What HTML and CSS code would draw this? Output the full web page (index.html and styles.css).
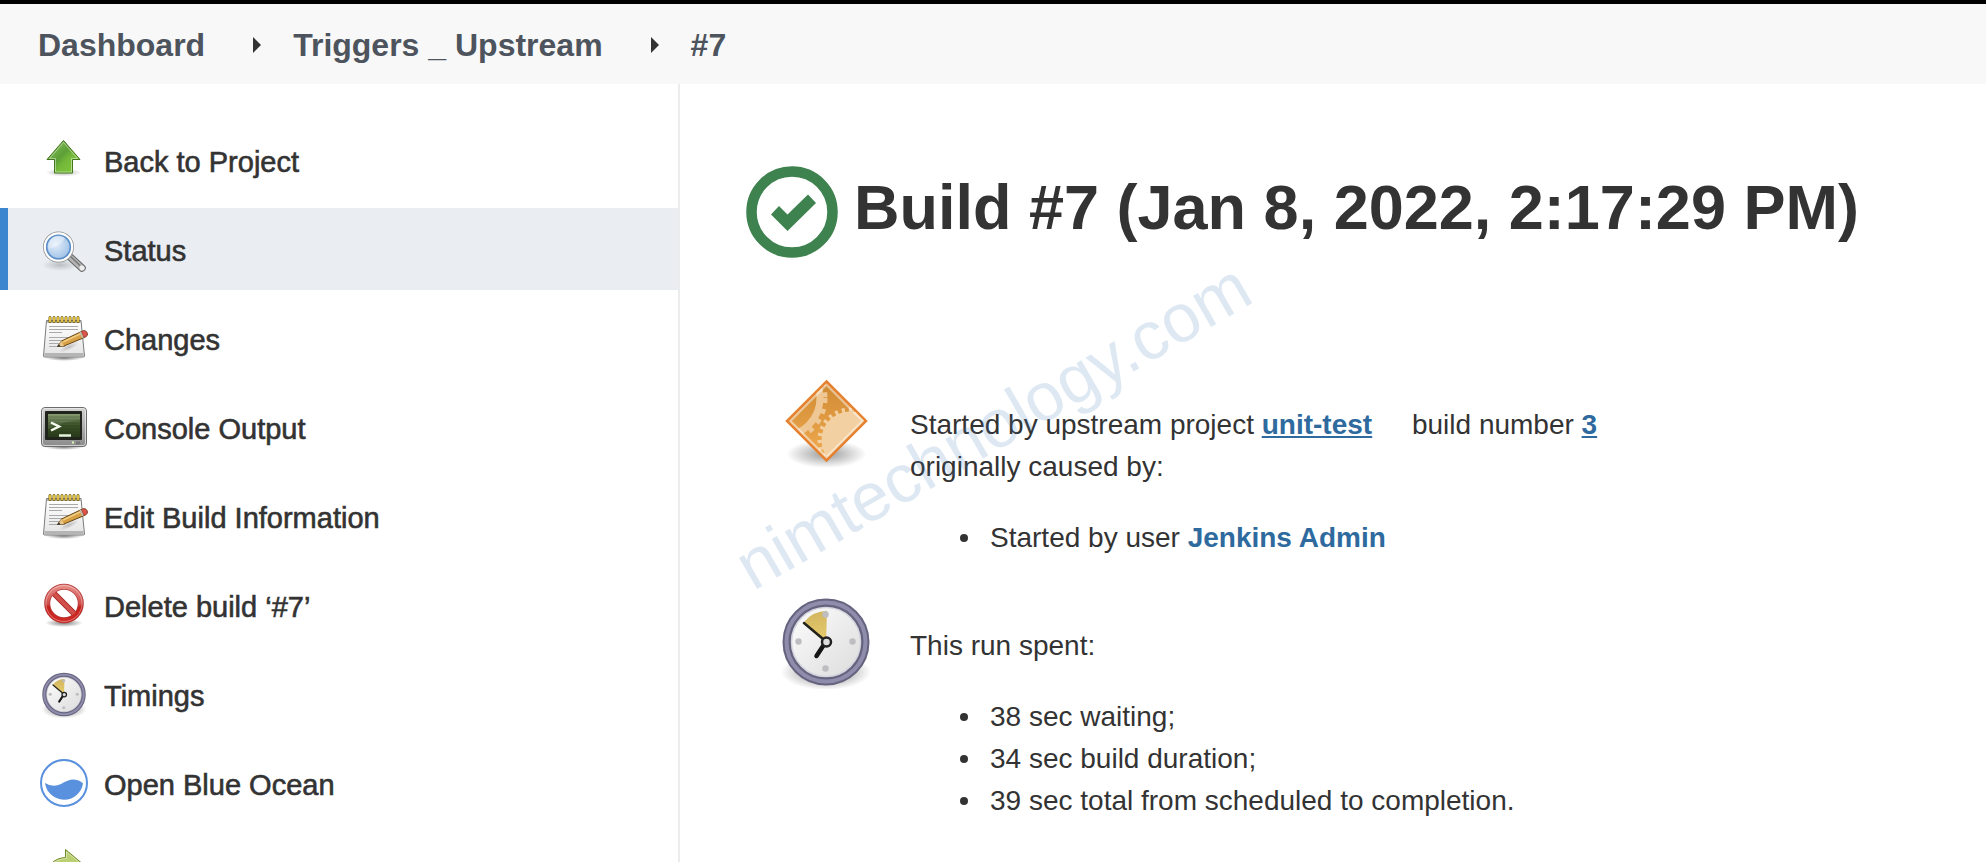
FILE: index.html
```html
<!DOCTYPE html>
<html lang="en">
<head>
    <meta charset="UTF-8">
    <meta name="viewport" content="width=device-width, initial-scale=1.0">
    <title>Triggers _ Upstream #7</title>
    <link rel="stylesheet" href="styles.css">
</head>
<body>

    <!-- shared icon definitions -->
    <svg class="defs" width="0" height="0" aria-hidden="true">
        <defs>
            <radialGradient id="shadow">
                <stop offset="0" stop-color="#000" stop-opacity=".5"/>
                <stop offset=".5" stop-color="#000" stop-opacity=".25"/>
                <stop offset="1" stop-color="#000" stop-opacity="0"/>
            </radialGradient>
            <linearGradient id="green" x1="0" y1="0" x2="1" y2="1">
                <stop offset="0" stop-color="#8fc765"/>
                <stop offset=".45" stop-color="#5d9f36"/>
                <stop offset=".6" stop-color="#74b83a"/>
                <stop offset="1" stop-color="#80cc38"/>
            </linearGradient>
            <radialGradient id="lens" cx=".4" cy=".4">
                <stop offset="0" stop-color="#e2edf9"/>
                <stop offset="1" stop-color="#a9c8e9"/>
            </radialGradient>
            <linearGradient id="paper" x1="0" y1="0" x2="0" y2="1">
                <stop offset="0" stop-color="#fff"/>
                <stop offset="1" stop-color="#e4e4e4"/>
            </linearGradient>
            <linearGradient id="metal" x1="0" y1="0" x2="0" y2="1">
                <stop offset="0" stop-color="#d4d4d4"/>
                <stop offset="1" stop-color="#8a8a8a"/>
            </linearGradient>
            <linearGradient id="screen" x1="0" y1="0" x2="0" y2="1">
                <stop offset="0" stop-color="#748c59"/>
                <stop offset=".5" stop-color="#3c5228"/>
                <stop offset="1" stop-color="#283b1a"/>
            </linearGradient>
            <linearGradient id="red" x1="0" y1="0" x2="0" y2="1">
                <stop offset="0" stop-color="#e58a86"/>
                <stop offset=".5" stop-color="#d2504b"/>
                <stop offset=".6" stop-color="#c4211d"/>
                <stop offset="1" stop-color="#cf2a26"/>
            </linearGradient>
            <linearGradient id="face" x1="0" y1="0" x2="1" y2="1">
                <stop offset="0" stop-color="#fff"/>
                <stop offset="1" stop-color="#dadada"/>
            </linearGradient>
            <linearGradient id="wedge" x1="0" y1="0" x2="0" y2="1">
                <stop offset="0" stop-color="#d2b560"/>
                <stop offset="1" stop-color="#e8cd6c"/>
            </linearGradient>
            <linearGradient id="orange" x1="0" y1="0" x2="0" y2="1">
                <stop offset="0" stop-color="#cf8a34"/>
                <stop offset="1" stop-color="#f0ab50"/>
            </linearGradient>
            <clipPath id="diamond">
                <path d="M48.500 11 86 48.500 48.500 86 11 48.500z"/>
            </clipPath>
        </defs>

        <symbol id="icon-notepad" viewBox="0 0 48 48">
            <ellipse cx="24" cy="44" rx="19" ry="3" fill="url(#shadow)"/>
            <path d="M6.500 6.500h34.500l3.500 35.500q0 1-1 1H4.500q-1 0-1-1z" fill="url(#paper)" stroke="#7c7c7c"/>
            <path d="M4.500 40.500h39" stroke="#b5b5b5" stroke-width="3"/>
            <path d="M7 8h34" stroke="#b4b4b4" stroke-width="2"/>
            <path d="M9 12.500h29M9 15.500h29M9 18.500h13M9 23.500h29M9 26.500h18M9 29.500h12M9 32.500h16" stroke="#aaa"/>
            <path d="M10 3.500v4M14 3.500v4M18 3.500v4M22 3.500v4M26 3.500v4M30 3.500v4M34 3.500v4M38 3.500v4" stroke="#765c10" stroke-width="3" stroke-linecap="round"/>
            <path d="M10 3.500v4M14 3.500v4M18 3.500v4M22 3.500v4M26 3.500v4M30 3.500v4M34 3.500v4M38 3.500v4" stroke="#ffe14e" stroke-width="1.500" stroke-linecap="round"/>
            <ellipse cx="29" cy="33" rx="11" ry="3" fill="url(#shadow)" opacity=".4" transform="rotate(-25 29 33)"/>
            <path d="M17.500 32.500l4-5.500 21-10q3-1 4.500 1.500t-1.500 4.500L24 32z" fill="#d8a044" stroke="#664515"/>
            <path d="M23 28L41 19.500" stroke="#f1ce83" stroke-width="1.500"/>
            <path d="M41.500 17.500l1-.5q3-1 4.500 1.500t-1.500 4.500l-1.500.5z" fill="#e0524b" stroke="#8a4b3f" stroke-width=".7"/>
            <path d="M40.200 18l2.600 6" stroke="#b9b9b9" stroke-width="1.500"/>
            <path d="M17.500 32.500l4-5.500 2.500 5z" fill="#e9c68a"/>
            <path d="M17 33l2-3 1.500 2.500z" fill="#333"/>
        </symbol>

        <symbol id="icon-clock" viewBox="0 0 96 96">
            <ellipse cx="48" cy="79" rx="45" ry="18" fill="url(#shadow)"/>
            <circle cx="48" cy="49" r="39" fill="url(#face)" stroke="#66637f" stroke-width="9"/>
            <circle cx="48" cy="49" r="39.500" fill="none" stroke="#8f8cac" stroke-width="4"/>
            <circle cx="48" cy="49" r="34.500" fill="none" stroke="#d5d5df" stroke-width="1.500"/>
            <path d="M48 48.500L26 29q9-11 23-11z" fill="url(#wedge)"/>
            <g fill="#bdbdc2">
                <circle cx="47.500" cy="21.500" r="3.200"/>
                <circle cx="74.500" cy="48.500" r="3.200"/>
                <circle cx="47.500" cy="75.500" r="3.200"/>
                <circle cx="20.500" cy="48.500" r="3.200"/>
            </g>
            <path d="M48 48.500L26 30" stroke="#22221a" stroke-width="2.500" stroke-linecap="round"/>
            <path d="M48 48.500L38.500 63" stroke="#161616" stroke-width="4.500" stroke-linecap="round"/>
            <circle cx="48.500" cy="49" r="4.500" fill="#ddd" stroke="#222" stroke-width="2.500"/>
        </symbol>
    </svg>

    <header class="breadcrumb-bar">
        <nav aria-label="Breadcrumb">
            <ul class="breadcrumbs">
                <li><a href="#">Dashboard</a></li>
                <li><a href="#">Triggers _ Upstream</a></li>
                <li><a href="#">#7</a></li>
            </ul>
        </nav>
    </header>

    <div class="page-body">
        <nav class="side-panel" aria-label="Tasks">
            <a class="task" href="#">
                <svg class="task-icon" viewBox="0 0 48 48">
                    <ellipse cx="23.500" cy="36.500" rx="18" ry="4" fill="url(#shadow)" opacity=".6"/>
                    <path d="M23.500 4.500l16.500 19h-7.500V37h-18V23.500H7z" fill="url(#green)" stroke="#40751a"/>
                    <path d="M23.500 6.500l14 16h-6V36h-16V22.500H9.500z" fill="none" stroke="#fff" stroke-opacity=".45"/>
                </svg>
                <span>Back to Project</span>
            </a>
            <a class="task task-active" href="#" aria-current="page">
                <svg class="task-icon" viewBox="0 0 48 48">
                    <ellipse cx="20" cy="40" rx="18" ry="6" fill="url(#shadow)" opacity=".4"/>
                    <path d="M29 31l13 12" stroke="#666" stroke-width="7.500" stroke-linecap="round"/>
                    <path d="M29 31l13 12" stroke="#b5b5b5" stroke-width="5.500" stroke-linecap="round"/>
                    <path d="M30 31l10 9.500" stroke="#777" stroke-width="1.500"/>
                    <circle cx="42" cy="43" r="2.500" fill="#eee"/>
                    <circle cx="18.500" cy="22" r="13.500" fill="url(#lens)" stroke="#8b8b8b" stroke-width="4"/>
                    <circle cx="18.500" cy="22" r="13.500" fill="none" stroke="#fff" stroke-width="2.600"/>
                    <circle cx="18.500" cy="22" r="11.800" fill="none" stroke="#5b8fca" stroke-width="1.600"/>
                    <path d="M9 24a10 10 0 0 1 16-11q-4 8-16 11z" fill="#fff" opacity=".35"/>
                </svg>
                <span>Status</span>
            </a>
            <a class="task" href="#">
                <svg class="task-icon"><use href="#icon-notepad"/></svg>
                <span>Changes</span>
            </a>
            <a class="task" href="#">
                <svg class="task-icon" viewBox="0 0 48 48">
                    <ellipse cx="24" cy="44" rx="20" ry="3" fill="url(#shadow)"/>
                    <rect x="1.500" y="4.500" width="45" height="39" rx="3.500" fill="url(#metal)" stroke="#6c6c6c"/>
                    <rect x="2.500" y="5.500" width="43" height="37" rx="2.500" fill="none" stroke="#eee" stroke-opacity=".7"/>
                    <rect x="5" y="8" width="37" height="29" rx="1" fill="#20241c"/>
                    <rect x="8" y="11" width="32" height="23" fill="url(#screen)"/>
                    <path d="M8 11h32v6Q24 18 8 26z" fill="#fff" opacity=".12"/>
                    <path d="M8 14h32M8 17h32M8 20h32M8 23h32M8 26h32M8 29h32M8 32h32" stroke="#1d2b12" stroke-opacity=".25"/>
                    <path d="M11 19.500l8 4-8 4" fill="none" stroke="#f4faee" stroke-width="2.500"/>
                    <path d="M19 32.500h12" stroke="#e3f3dc" stroke-width="2.500"/>
                    <rect x="32" y="38.500" width="2" height="2" fill="#d9f7b2"/>
                    <rect x="36" y="38.500" width="4" height="3" fill="#777"/>
                </svg>
                <span>Console Output</span>
            </a>
            <a class="task" href="#">
                <svg class="task-icon"><use href="#icon-notepad"/></svg>
                <span>Edit Build Information</span>
            </a>
            <a class="task" href="#">
                <svg class="task-icon" viewBox="0 0 48 48">
                    <ellipse cx="24" cy="42" rx="19" ry="4" fill="url(#shadow)"/>
                    <circle cx="24" cy="22.500" r="17" fill="#fff"/>
                    <path d="M12.500 11l23 23" stroke="#a31d1a" stroke-width="6"/>
                    <circle cx="24" cy="22.500" r="16.800" fill="none" stroke="#b13a36" stroke-width="6"/>
                    <path d="M12.500 11l23 23" stroke="#d2504b" stroke-width="4.500"/>
                    <circle cx="24" cy="22.500" r="16.800" fill="none" stroke="url(#red)" stroke-width="4.500"/>
                    <circle cx="24" cy="22.500" r="18" fill="none" stroke="#fff" stroke-opacity=".35"/>
                </svg>
                <span>Delete build ‘#7’</span>
            </a>
            <a class="task" href="#">
                <svg class="task-icon"><use href="#icon-clock"/></svg>
                <span>Timings</span>
            </a>
            <a class="task" href="#">
                <svg class="task-icon" viewBox="0 0 48 48">
                    <circle cx="24" cy="24" r="23" fill="#fff" stroke="#5a91de" stroke-width="2"/>
                    <path d="M5 24q8 5 16 1 8-5 13-4.500 6 .5 9 4a19.200 19.200 0 0 1-38-.5z" fill="#5a91de"/>
                </svg>
                <span>Open Blue Ocean</span>
            </a>
            <a class="task" href="#" aria-label="Restart">
                <svg class="task-icon" viewBox="0 0 48 48">
                    <path d="M25.500 1.500v8C14 10 6 18 6 30c4-8 10-11 19.500-11v9L41 14.500z" fill="#b9cf70" stroke="#6e8a28"/>
                    <path d="M26.500 4v6.500C16 11 9 17 7.500 24 12 19 18 18 26.500 18v7.500l13-11z" fill="none" stroke="#fff" stroke-opacity=".4"/>
                </svg>
            </a>
        </nav>

        <main class="main-panel">
            <div class="build-caption">
                <svg class="build-status" viewBox="0 0 92 92" role="img" aria-label="Success">
                    <circle cx="46" cy="46" r="40.500" fill="none" stroke="#3e824f" stroke-width="10.500"/>
                    <path d="M25 48.500l8-8.500 8.500 8.500L62 28.500l8 8.500-28.500 28z" fill="#3e824f"/>
                </svg>
                <h1>Build #7 (Jan 8, 2022, 2:17:29 PM)</h1>
            </div>

            <section class="summary">
                <svg class="summary-icon" viewBox="0 0 96 96">
                    <ellipse cx="48.500" cy="82" rx="40" ry="14" fill="url(#shadow)" opacity=".8"/>
                    <path d="M48.500 9.500L88 49 48.500 88.500 9 49z" fill="#e9b677" stroke="#e6812f" stroke-width="2.500"/>
                    <g clip-path="url(#diamond)">
                        <path d="M48.500 12L85 48.500 48.500 85 12 48.500z" fill="url(#orange)"/>
                        <circle cx="4" cy="26" r="38" fill="none" stroke="#eec795" stroke-width="7"/>
                        <circle cx="4" cy="26" r="43" fill="none" stroke="#eec795" stroke-width="5" stroke-dasharray="5 6"/>
                        <circle cx="72" cy="68" r="28.500" fill="#f3d0a2"/>
                        <circle cx="72" cy="68" r="30" fill="none" stroke="#f3d0a2" stroke-width="5" stroke-dasharray="3 4"/>
                    </g>
                    <path d="M48.500 13l36 36-36 36-36-36z" fill="none" stroke="#fff" stroke-opacity=".45" stroke-width="2"/>
                </svg>
                <div class="summary-text">
                    Started by upstream project <a class="model-link" href="#">unit-test</a> build number <a href="#">3</a><br>
                    originally caused by:
                    <ul>
                        <li>Started by user <a class="user-link" href="#">Jenkins Admin</a></li>
                    </ul>
                </div>
            </section>

            <section class="summary">
                <svg class="summary-icon"><use href="#icon-clock"/></svg>
                <div class="summary-text">
                    This run spent:
                    <ul>
                        <li>38 sec waiting;</li>
                        <li>34 sec build duration;</li>
                        <li>39 sec total from scheduled to completion.</li>
                    </ul>
                </div>
            </section>

            <div class="watermark">nimtechnology.com</div>
        </main>
    </div>

</body>
</html>
```
FILE: styles.css
```css
* {
    box-sizing: border-box;
}
body {
    display: flex;
    flex-direction: column;
    height: 100vh;
    margin: 0;
    overflow: hidden;
    font-family: "Liberation Sans", Arial, sans-serif;
    font-size: 28px;
    line-height: 42px;
    color: #333;
    background: #fff;
}
ul {
    margin: 0;
    padding: 0;
    list-style: none;
}
.defs {
    position: absolute;
}

/* Breadcrumbs */
.breadcrumb-bar {
    flex: none;
    padding: 21px 38px 19px;
    border-top: 4px solid #000;
    background: #f8f8f8;
}
.breadcrumbs {
    display: flex;
    font-size: 32px;
    line-height: 40px;
    font-weight: bold;
}
.breadcrumbs li {
    display: flex;
    align-items: center;
}
.breadcrumbs li + li::before {
    content: "";
    margin: 0 32px 0 48px;
    border-left: 8px solid #333;
    border-top: 8px solid transparent;
    border-bottom: 8px solid transparent;
}
.breadcrumbs a {
    color: #4d545d;
    text-decoration: none;
}

.page-body {
    display: flex;
    flex: 1;
    min-height: 0;
}

/* Side panel */
.side-panel {
    display: flex;
    flex-direction: column;
    flex: none;
    gap: 7px;
    width: 680px;
    padding-top: 35px;
    border-right: 2px solid #eaecee;
    overflow: hidden;
}
.task {
    display: flex;
    flex: none;
    align-items: center;
    gap: 16px;
    height: 82px;
    padding-left: 32px;
    border-left: 8px solid transparent;
    font-size: 29px;
    color: #333;
    text-decoration: none;
    -webkit-text-stroke: 0.6px #333; /* medium weight */
}
.task span {
    padding-top: 3px;
}
.task-active {
    border-left-color: #3b86cf;
    background: #eaeef2;
}
.task-icon {
    flex: none;
    width: 48px;
    height: 48px;
}

/* Main panel */
.main-panel {
    position: relative;
    flex: 1;
    min-width: 0;
    padding: 82px 66px 0;
}
.build-caption {
    display: flex;
    gap: 16px;
    margin-bottom: 114px;
}
.build-status {
    flex: none;
    width: 92px;
    height: 92px;
}
h1 {
    margin: 0;
    font-size: 63px;
    line-height: 82px;
    white-space: nowrap;
}
.summary {
    display: flex;
    gap: 36px;
    margin-bottom: 34px;
    padding-left: 32px;
}
.summary-icon {
    flex: none;
    width: 96px;
    height: 96px;
}
.summary-text {
    padding-top: 32px;
}
.summary-text ul {
    margin-top: 29px;
    padding-left: 50px;
}
.summary-text li {
    display: flex;
    align-items: center;
    white-space: pre-wrap;
}
.summary-text li::before {
    content: "";
    width: 8px;
    height: 8px;
    margin-right: 22px;
    border-radius: 50%;
    background: #333;
}
.summary a {
    color: #2e6a9e;
    font-weight: bold;
}
.summary .model-link {
    margin-right: 32px;
}
.summary .user-link {
    text-decoration: none;
}
.watermark {
    position: absolute;
    left: 78px;
    bottom: 262px;
    font-size: 68px;
    line-height: 68px;
    color: rgba(70, 130, 190, 0.18);
    transform: rotate(-30deg);
    transform-origin: left bottom;
    pointer-events: none;
}
```
